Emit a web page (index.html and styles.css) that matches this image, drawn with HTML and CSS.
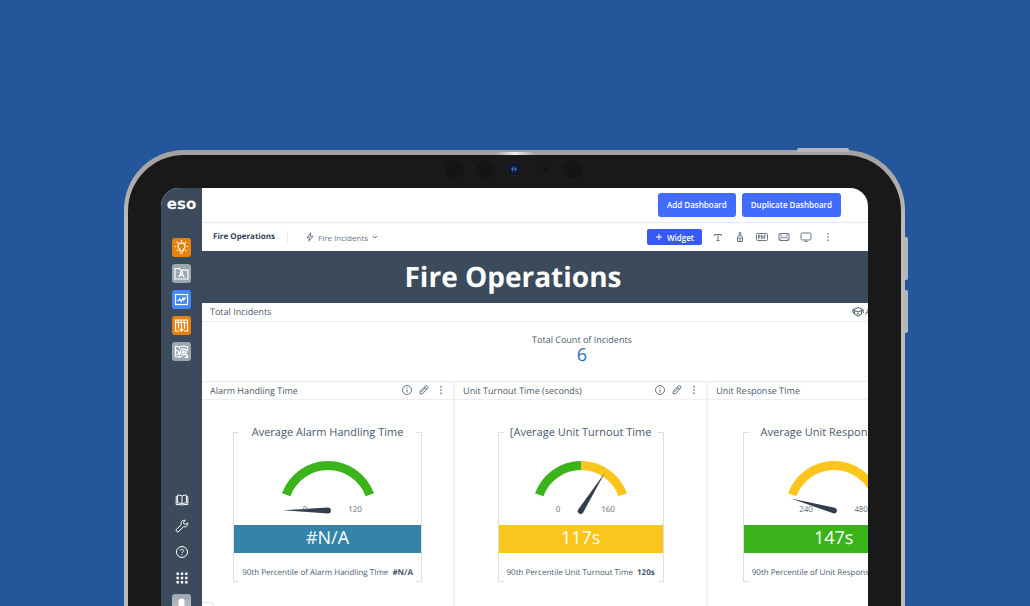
FILE: index.html
```html
<!DOCTYPE html>
<html lang="en">
<head>
  <meta charset="UTF-8" />
  <meta name="viewport" content="width=device-width, initial-scale=1.0"/>
  <title>Fire Operations</title>
  <link rel="stylesheet" href="styles.css">
</head>
<body>

<div class="tablet">
  <span class="hw hw-top"></span>
  <span class="hw hw-vol-up"></span>
  <span class="hw hw-vol-down"></span>
  <span class="shine"></span>

  <div class="bezel">
    <svg class="cameras" viewBox="0 0 140 20" width="140" height="20" aria-hidden="true">
      <g fill="#141414">
        <circle cx="11" cy="10" r="9"/>
        <circle cx="41" cy="10" r="8.5"/>
        <circle cx="101" cy="10" r="2.5"/>
        <circle cx="129" cy="10" r="9"/>
      </g>
      <circle cx="70" cy="10" r="6.5" fill="#10131f" stroke="#1b2338"/>
      <circle cx="70" cy="10" r="4" fill="#152349"/>
      <path d="M68.500 8.500v3M71.500 8.500v3" stroke="#4a74c0" stroke-width="1.600"/>
    </svg>

    <div class="screen">
      <aside class="sidebar">
        <a class="logo" href="#">eso</a>

        <nav class="apps" aria-label="Apps">
          <a class="app orange" href="#" aria-label="Insights">
            <svg viewBox="0 0 19 19"><path d="M7.800 13v-1.600C6.500 10.600 6 9.500 6 8.300a3.500 3.500 0 0 1 7 0c0 1.200-.5 2.300-1.800 3.100V13zM8 15h3M9.500 2v1.400M4.800 4l1 1M14.200 4l-1 1M2.800 8.500h1.400M14.800 8.500h1.400M4.800 12.800l1-.9M14.200 12.800l-1-.9"/></svg>
          </a>
          <a class="app grey" href="#" aria-label="Personnel">
            <svg viewBox="0 0 19 19"><path d="M3 15V4.500h4.500L9 6.200h7V15z"/><circle cx="9.500" cy="8.900" r="1.200"/><path d="M7 13.200c.2-1.800 1.200-2.600 2.500-2.600s2.300.8 2.500 2.600M9.500 10.600v1.600"/></svg>
          </a>
          <a class="app blue" href="#" aria-label="Analytics">
            <svg viewBox="0 0 19 19"><rect x="3.500" y="4.500" width="12" height="10"/><path d="M5.300 10.500h1.500l1-1.700 1.500 2.700 1.700-3.500.8 2 1.900-3"/></svg>
          </a>
          <a class="app orange" href="#" aria-label="Assets">
            <svg viewBox="0 0 19 19"><path d="M7 15H3.500V4h12v11H12M3.500 6.500h12M6.500 6.500v6M9.500 6.500v8.500M12.500 6.500v6M7.800 13.200l1.700 1.900 1.700-1.900M6 4v2M9 4v2M12 4v2"/></svg>
          </a>
          <a class="app grey" href="#" aria-label="Map">
            <svg viewBox="0 0 19 19"><path d="M3.500 4l4 1 4-1 4 1v4M3.500 4v10.500l4 .7 3-.7M7.500 5v2M3.500 8.500h2l1 1.500v2l-2 .8M7.500 10v5M15.500 13v2.500l-3-.5"/><circle cx="11.300" cy="9.800" r="3"/><circle cx="11.300" cy="9.800" r="1"/><path d="M13.500 12l2 2.200"/></svg>
          </a>
        </nav>

        <nav class="tools" aria-label="Help and account">
          <a href="#" aria-label="Guide">
            <svg viewBox="0 0 14 14"><path d="M7 3.200C5.800 2.100 4.200 2 2.600 2.200v7.900c1.600-.2 3.200 0 4.400 1 1.200-1 2.800-1.200 4.400-1V2.200C9.800 2 8.200 2.100 7 3.200zv7.900M2.600 3.600H1.200v8h4.600c.6.600 1.800.6 2.400 0h4.600v-8h-1.400"/></svg>
          </a>
          <a href="#" aria-label="Settings">
            <svg viewBox="0 0 14 14"><path d="M12.600 3.800l-2 1.500-1.700-.5-.4-1.700L10.300 1.400C8.600.8 6.700 1.700 6.200 3.500c-.2.700-.1 1.400.1 2L1.600 10.200a1.500 1.500 0 0 0 2.200 2.200l4.700-4.700c2.700.9 4.900-1.500 4.100-3.900z"/></svg>
          </a>
          <a href="#" aria-label="Help">
            <svg viewBox="0 0 14 14"><circle cx="7" cy="7" r="5.500"/><path d="M5.400 5.700c0-2 3.200-2 3.200 0 0 1.200-1.600 1.200-1.600 2.400M7 9.300v1.100"/></svg>
          </a>
          <a href="#" aria-label="All apps">
            <svg viewBox="0 0 14 14"><path class="dots" d="M1.500 1.500h2.400v2.400H1.500zM5.800 1.500h2.400v2.400H5.800zM10.100 1.500h2.400v2.400h-2.400zM1.500 5.800h2.400v2.400H1.500zM5.800 5.800h2.400v2.400H5.800zM10.100 5.800h2.400v2.400h-2.400zM1.500 10.100h2.400v2.400H1.500zM5.800 10.100h2.400v2.400H5.800zM10.100 10.100h2.400v2.400h-2.400z"/></svg>
          </a>
          <a class="avatar" href="#" aria-label="Account">
            <svg viewBox="0 0 19 19"><rect x="6.500" y="4.500" width="6" height="9" rx="3"/></svg>
          </a>
        </nav>
      </aside>

      <main class="main">
        <header class="topbar">
          <button class="btn">Add Dashboard</button>
          <button class="btn">Duplicate Dashboard</button>
        </header>

        <div class="toolbar">
          <span class="page-name">Fire Operations</span>
          <button class="source">
            <svg viewBox="0 0 10 10" width="10" height="10"><path d="M5.800.8L2 5.600h2.500L4 9.200 8 4.300H5.300z"/></svg>
            Fire Incidents
            <svg viewBox="0 0 8 8" width="8" height="8"><path d="M1.800 3l2.200 2 2.200-2"/></svg>
          </button>
          <div class="actions">
            <button class="btn btn-widget">
              <svg viewBox="0 0 8 8" width="8" height="8"><path d="M4 1v6M1 4h6"/></svg>
              Widget
            </button>
            <button class="icon-btn" aria-label="Text">
              <svg viewBox="0 0 12 12"><path d="M2.500 5V3.500h7V5M6 3.500v6M4.500 9.500h3"/></svg>
            </button>
            <button class="icon-btn" aria-label="Theme">
              <svg viewBox="0 0 12 12"><path d="M5.200 4.500V1.800L6 1l.8.800v2.700M3.500 6.300c0-2 5-2 5 0v4.200h-5zM3.500 7.200h5M6 8v2"/></svg>
            </button>
            <button class="icon-btn" aria-label="Export PDF">
              <svg viewBox="0 0 12 12"><rect x=".5" y="2.500" width="11" height="7" rx="1"/><path d="M2.500 8V4.300h1.400v1.800H2.500M5.300 4.300v3.400h.8l.7-.8V5l-.7-.7zM8.200 8V4.300h1.700M8.200 6h1.300"/></svg>
            </button>
            <button class="icon-btn" aria-label="Email">
              <svg viewBox="0 0 12 12"><rect x="1" y="2.500" width="10" height="7" rx="1"/><path d="M1.500 3l3 3L6 7.200 7.500 6l3-3M1.500 9l2.500-3M10.500 9L8 6"/></svg>
            </button>
            <button class="icon-btn" aria-label="Present">
              <svg viewBox="0 0 12 12"><rect x="1" y="2" width="10" height="7" rx="1.500"/><path d="M4.500 10.500h3"/></svg>
            </button>
            <button class="icon-btn" aria-label="More">
              <svg viewBox="0 0 12 12"><path class="dots" d="M5.300 2h1.400v1.400H5.300zM5.300 5.300h1.400v1.400H5.300zM5.300 8.600h1.400V10H5.300z"/></svg>
            </button>
          </div>
        </div>

        <h1 class="banner">Fire Operations</h1>

        <section class="total">
          <header class="widget-head">
            <h2>Total Incidents</h2>
            <span class="learn">
              <svg viewBox="0 0 12 12" width="12" height="12"><path d="M6 1.500L.8 3.700 6 6l5.200-2.300zM2.500 4.600v3.500L6 10.200l3.500-2.100V4.600M.9 4v2.500l1.600.8M11.200 4v3M4.500 8.500L6 7.300l1.500 1.200"/></svg>
              <span>A</span>
            </span>
          </header>
          <div class="total-body">
            <p>Total Count of Incidents</p>
            <strong>6</strong>
          </div>
        </section>

        <div class="cards">
          <section class="card">
            <header class="widget-head">
              <h2>Alarm Handling Time</h2>
              <div class="card-actions">
                <button class="icon-btn" aria-label="Info"><svg viewBox="0 0 12 12"><circle cx="6" cy="6" r="4.500"/><path d="M6 5.300v3.200M6 3.300v1"/></svg></button>
                <button class="icon-btn" aria-label="Edit"><svg viewBox="0 0 12 12"><path d="M2 10l.4-3L7.600 1.800q1-.6 1.800.2t.3 1.900L4.900 9.500zM3.500 8l4-4.300M6.500 3l2.300 2.300"/></svg></button>
                <button class="icon-btn" aria-label="More"><svg viewBox="0 0 12 12"><path class="dots" d="M5.300 2h1.400v1.400H5.300zM5.300 5.300h1.400v1.400H5.300zM5.300 8.600h1.400V10H5.300z"/></svg></button>
              </div>
            </header>
            <div class="gauge-box">
              <h3>Average Alarm Handling Time</h3>
              <svg class="gauge" viewBox="0 0 100 60" width="100" height="60">
                <path class="arc green" d="M8.200 36.800A44.500 44.500 0 0 1 91.800 36.800"/>
                <path class="needle" d="M5 52.200L50 49.600a2.900 2.900 0 0 1 0 5.800z"/>
                <text x="27" y="54">0</text>
                <text x="77" y="54">120</text>
              </svg>
              <div class="value teal">#N/A</div>
              <p>90th Percentile of Alarm Handling TIme <b>#N/A</b></p>
            </div>
          </section>

          <section class="card">
            <header class="widget-head">
              <h2>Unit Turnout Time (seconds)</h2>
              <div class="card-actions">
                <button class="icon-btn" aria-label="Info"><svg viewBox="0 0 12 12"><circle cx="6" cy="6" r="4.500"/><path d="M6 5.300v3.200M6 3.300v1"/></svg></button>
                <button class="icon-btn" aria-label="Edit"><svg viewBox="0 0 12 12"><path d="M2 10l.4-3L7.600 1.800q1-.6 1.800.2t.3 1.900L4.900 9.500zM3.500 8l4-4.300M6.500 3l2.300 2.300"/></svg></button>
                <button class="icon-btn" aria-label="More"><svg viewBox="0 0 12 12"><path class="dots" d="M5.300 2h1.400v1.400H5.300zM5.300 5.300h1.400v1.400H5.300zM5.300 8.600h1.400V10H5.300z"/></svg></button>
              </div>
            </header>
            <div class="gauge-box">
              <h3>[Average Unit Turnout Time</h3>
              <svg class="gauge" viewBox="0 0 100 60" width="100" height="60">
                <path class="arc green" d="M8.200 36.800A44.500 44.500 0 0 1 50 7.500"/>
                <path class="arc yellow" d="M50 7.500A44.500 44.500 0 0 1 91.800 36.800"/>
                <path class="needle" d="M74 14.500L52.200 54.400a2.900 2.900 0 0 1-5-3z"/>
                <text x="27" y="54">0</text>
                <text x="77" y="54">160</text>
              </svg>
              <div class="value amber">117s</div>
              <p>90th Percentile Unit Turnout Time <b>120s</b></p>
            </div>
          </section>

          <section class="card">
            <header class="widget-head">
              <h2>Unit Response TIme</h2>
            </header>
            <div class="gauge-box">
              <h3>Average Unit Response Time</h3>
              <svg class="gauge" viewBox="0 0 100 60" width="100" height="60">
                <path class="arc yellow" d="M8.200 36.800A44.500 44.500 0 0 1 91.800 36.800"/>
                <path class="needle" d="M7 40.500L50.800 49.700a2.900 2.900 0 0 1-1.500 5.600z"/>
                <text x="22" y="54">240</text>
                <text x="77" y="54">480</text>
              </svg>
              <div class="value lime">147s</div>
              <p>90th Percentile of Unit Response Time <b>147s</b></p>
            </div>
          </section>
        </div>
        <span class="status-tab"></span>
      </main>
    </div>
  </div>
</div>

</body>
</html>
```
FILE: styles.css
```css
* {
  box-sizing: border-box;
}

body {
  margin: 0;
  padding: 150px 125px 0 124px;
  height: 100vh;
  overflow: hidden;
  display: flex;
  background: #23569b;
  color: #4a5a6c;
  font-family: 'Open Sans', 'Noto Sans', sans-serif;
  font-size: 9px;
  text-rendering: geometricPrecision;
}

h1, h2, h3, p {
  margin: 0;
}

a {
  color: inherit;
  text-decoration: none;
}

button {
  padding: 0;
  border: none;
  background: none;
  color: inherit;
  font: inherit;
  cursor: pointer;
}

svg {
  display: block;
  fill: none;
  stroke: currentColor;
}

svg .dots {
  fill: currentColor;
  stroke: none;
}

/* device */
.tablet {
  position: relative;
  flex: 1;
  min-width: 0;
  display: flex;
  padding: 5px 4px 0;
  border-radius: 60px 60px 0 0;
  background: linear-gradient(#a3a3a2 0, #a3a3a2 6px, #bcbab9 70px);
}

.bezel {
  position: relative;
  flex: 1;
  min-width: 0;
  display: flex;
  padding: 33px 33px 0;
  border-radius: 56px 56px 0 0;
  background: #191919;
}

.cameras {
  position: absolute;
  top: 4px;
  left: 50%;
  margin-left: -71px;
  stroke: none;
}

.hw {
  position: absolute;
  background: #b3b8c0;
}

.hw-top {
  top: -2px;
  right: 56px;
  width: 52px;
  height: 4px;
  border-radius: 2px 2px 0 0;
}

.hw-vol-up, .hw-vol-down {
  right: -3px;
  width: 3px;
  height: 43px;
  border-radius: 0 2px 2px 0;
}

.hw-vol-up {
  top: 87px;
}

.hw-vol-down {
  top: 140px;
}

.shine {
  position: absolute;
  top: 2px;
  left: 50%;
  width: 38px;
  height: 3px;
  margin-left: -19px;
  background: linear-gradient(90deg, transparent, #f0f0f0, transparent);
}

.screen {
  flex: 1;
  min-width: 0;
  display: flex;
  overflow: hidden;
  border-radius: 18px 18px 0 0;
  background: #fff;
}

/* sidebar */
.sidebar {
  flex: none;
  width: 41px;
  display: flex;
  flex-direction: column;
  align-items: center;
  background: #3c4b5b;
  color: #fff;
}

.logo {
  height: 50px;
  line-height: 32px;
  font-family: 'DejaVu Sans', sans-serif;
  font-size: 15px;
  font-weight: 700;
}

.apps {
  display: flex;
  flex-direction: column;
  gap: 7px;
}

.app {
  width: 19px;
  height: 19px;
  border-radius: 3px;
}

.app svg {
  stroke-width: 1.2;
}

.orange {
  background: #e8820f;
}

.grey {
  background: #9da7b2;
}

.blue {
  background: #4489f8;
}

.tools {
  margin-top: auto;
  margin-bottom: -8px;
  display: flex;
  flex-direction: column;
  align-items: center;
  gap: 12px;
}

.tools a {
  width: 14px;
  height: 14px;
}

.tools .avatar {
  width: 19px;
  height: 20px;
  margin-top: -3px;
  border-radius: 3px;
  background: linear-gradient(#9ba5ac, #c5cccf);
}

.avatar svg {
  fill: #fff;
  stroke: none;
}

/* main area */
.main {
  position: relative;
  flex: 1;
  min-width: 0;
  overflow: hidden;
  display: flex;
  flex-direction: column;
}

.topbar {
  display: flex;
  justify-content: flex-end;
  gap: 6px;
  padding: 5px 27px;
  border-bottom: 1px solid #e6e9f3;
}

.btn {
  height: 24px;
  padding: 0 9px 1px;
  border-radius: 3px;
  background: #426cfd;
  color: #fff;
  font-size: 8px;
  font-weight: 600;
}

.toolbar {
  display: flex;
  align-items: center;
  height: 28px;
  padding: 0 34px 0 11px;
}

.page-name {
  padding: 0 12px 2px 0;
  border-right: 1px solid #eceef2;
  color: #334355;
  font-size: 8px;
  font-weight: 700;
}

.source {
  display: flex;
  align-items: center;
  gap: 3px;
  margin-left: 17px;
  color: #66758a;
  font-size: 8px;
}

.actions {
  display: flex;
  align-items: center;
  gap: 10px;
  margin-left: auto;
}

.btn-widget {
  display: flex;
  align-items: center;
  gap: 4px;
  height: 16px;
  padding: 0 8px;
  border-radius: 2px;
  background: #375af6;
}

.icon-btn {
  width: 12px;
  height: 12px;
  color: #66758a;
}

.banner {
  padding: 1px 44px 0 0;
  background: #3c4b5b;
  color: #fff;
  font-size: 28px;
  font-weight: 700;
  line-height: 51px;
  text-align: center;
}

.widget-head {
  display: flex;
  align-items: center;
  justify-content: space-between;
  height: 19px;
  padding: 0 8px 1px;
  border-bottom: 1px solid #edeff2;
}

.widget-head h2 {
  color: #4a5a6c;
  font-size: 9px;
  font-weight: 400;
}

.learn {
  display: flex;
  align-items: center;
  gap: 1px;
  margin-right: -11px;
}

.total-body {
  height: 59px;
  padding: 12px 0 0 94px;
  text-align: center;
}

.total-body p {
  line-height: 12px;
}

.total-body strong {
  display: block;
  color: #2572c4;
  font-size: 18px;
  font-weight: 400;
  line-height: 18px;
}

/* the third card runs past the edge of the screen */
.cards {
  flex: 1;
  display: grid;
  grid-template-columns: repeat(3, 38%);
  border-top: 1px solid #e9ebee;
}

.card {
  display: flex;
  flex-direction: column;
  align-items: center;
  border-right: 2px solid #f1f2f4;
}

.card .widget-head {
  align-self: stretch;
  height: 18px;
}

.card-actions {
  display: flex;
  gap: 5px;
  margin-right: -2px;
}

/* square brackets drawn round the gauge, starting level with its title */
.gauge-box {
  --line: linear-gradient(#dcdfe3, #dcdfe3);
  margin-top: 24px;
  padding: 0 1px 1px;
  display: flex;
  flex-direction: column;
  align-items: center;
  background:
    var(--line) left bottom / 1px calc(100% - 8px),
    var(--line) right bottom / 1px calc(100% - 8px),
    var(--line) left 8px / 6px 1px,
    var(--line) right 8px / 6px 1px,
    var(--line) left bottom / 6px 1px,
    var(--line) right bottom / 6px 1px;
  background-repeat: no-repeat;
}

.gauge-box h3 {
  font-size: 11px;
  font-weight: 400;
  line-height: 18px;
}

.gauge {
  margin: 16px 0 7px;
}

.gauge text {
  fill: #5c6a7a;
  stroke: none;
  font-size: 8px;
  text-anchor: middle;
}

.arc {
  stroke-width: 9;
}

.arc.green {
  stroke: #3bb41c;
}

.arc.yellow {
  stroke: #fbc51c;
}

.needle {
  fill: #323d4e;
  stroke: none;
}

.value {
  align-self: stretch;
  height: 28px;
  color: #fff;
  font-size: 18px;
  line-height: 26px;
  text-align: center;
}

.teal {
  background: #3484a8;
}

.amber {
  background: #fac51c;
}

.lime {
  background: #3bb41c;
}

.gauge-box p {
  padding: 14px 8px 2px;
  font-size: 8px;
  line-height: 12px;
  white-space: nowrap;
}

.gauge-box b {
  margin-left: 2px;
}

.status-tab {
  position: absolute;
  left: 0;
  bottom: 0;
  width: 12px;
  height: 4px;
  border: solid #e3e6ea;
  border-width: 1px 1px 0 0;
  border-radius: 0 3px 0 0;
}
```
